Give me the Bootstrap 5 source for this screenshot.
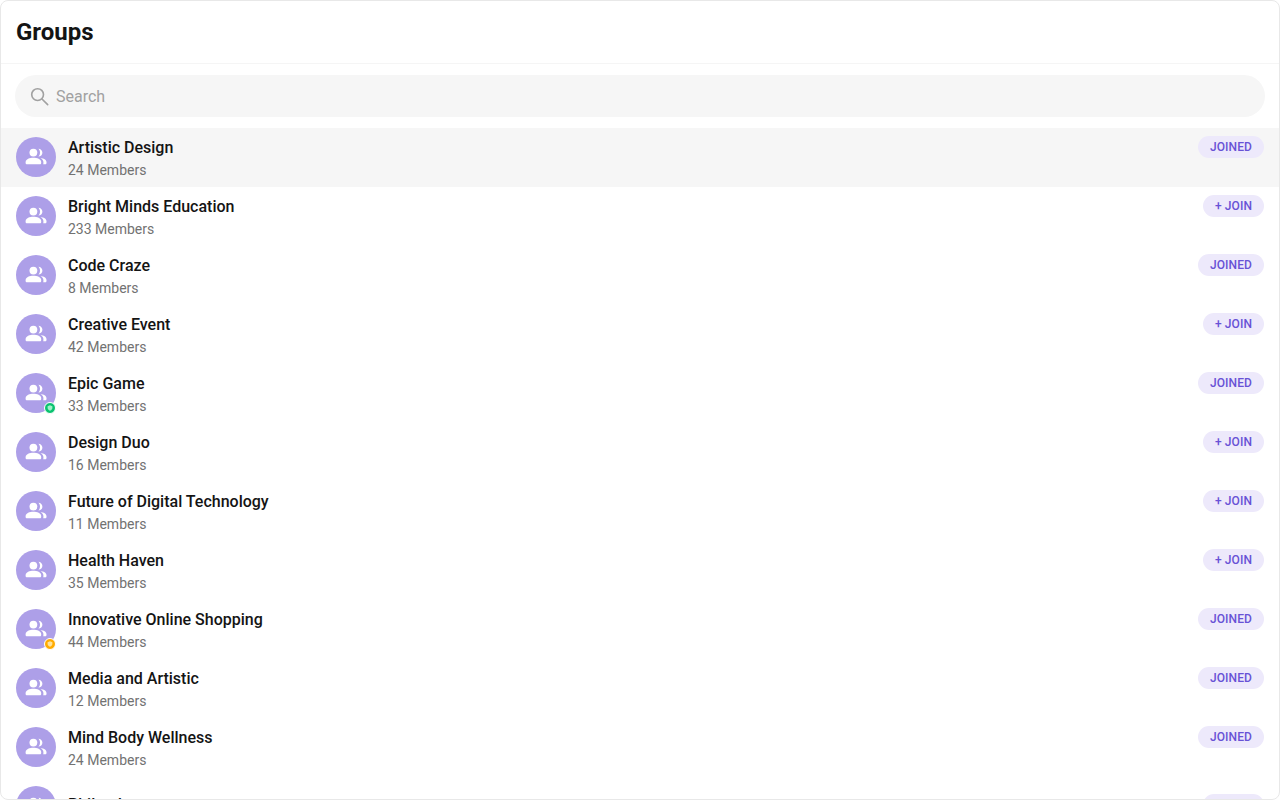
<!DOCTYPE html>
<html lang="en">

<head>
    <meta charset="UTF-8">
    <meta name="viewport" content="width=device-width, initial-scale=1.0">
    <title>Groups</title>
    <link href="https://cdn.jsdelivr.net/npm/bootstrap@5.3.0/dist/css/bootstrap.min.css" rel="stylesheet">
    <style>
        html, body {
            height: 100%;
            overflow: hidden;
        }

        body {
            font-family: Roboto, "Liberation Sans", sans-serif;
            background-color: #fff;
        }

        .groups-panel {
            height: 800px;
            border: 1px solid #e8e8e8;
            border-radius: 8px;
            overflow: hidden;
        }

        .groups-head {
            height: 63px;
            padding-left: 15px;
            border-bottom: 1px solid #f5f5f5;
        }

        .groups-head h1 {
            font-size: 24px;
            line-height: 28px;
            font-weight: 700;
            color: #141414;
        }

        .search-wrap {
            padding: 11px 14px;
        }

        .search-box {
            height: 42px;
            padding: 1px 0 0 15px;
            gap: 7px;
            background-color: #f6f6f6;
            border-radius: 21px;
            font-size: 16px;
            color: #a1a1a1;
        }

        .group-row {
            height: 59px;
            padding: 0 15px;
            gap: 12px;
        }

        .group-row.active-row {
            background-color: #f6f6f6;
        }

        .group-avatar {
            width: 40px;
            height: 40px;
            margin-top: 9px;
            background-color: #ad9fe8;
        }

        .status-dot {
            position: absolute;
            right: 0;
            bottom: -1px;
            width: 12px;
            height: 12px;
            border: 1px solid #fff;
        }

        .status-dot.dot-green {
            background-color: #09c26f;
        }

        .status-dot.dot-orange {
            background-color: #ffab00;
        }

        .status-dot svg {
            display: block;
            margin: 2px;
        }

        .group-name {
            font-size: 16px;
            line-height: 19px;
            font-weight: 500;
            color: #141414;
            margin-top: 10px;
        }

        .group-count {
            font-size: 14px;
            line-height: 17px;
            color: #727272;
            margin-top: 5px;
        }

        .join-btn {
            height: 22px;
            margin-top: 8px;
            padding: 0 12px;
            background-color: #ede9fb;
            border-radius: 11px;
            font-size: 12px;
            line-height: 22px;
            font-weight: 500;
            letter-spacing: .1px;
            color: #6852d6;
        }

        /* last row sits lower in the list, only its top shows */
        .group-row.low-row .group-name {
            margin-top: 18px;
        }

        .group-row.low-row .join-btn {
            margin-top: 17px;
        }
    </style>
</head>

<body>
    <svg width="0" height="0" class="d-block">
        <symbol id="group-icon" viewBox="0 0 24 24">
            <circle cx="9.4" cy="7.6" r="3.9" />
            <path d="M1.6 17.2c0-3 4.2-4.4 7.8-4.4s7.8 1.4 7.8 4.4v.7c0 .9-.6 1.4-1.4 1.4H3c-.8 0-1.4-.5-1.4-1.4z" />
            <path d="M14.4 3.8c2.3.1 4 1.8 4 3.9s-1.7 3.8-4 3.9c1-1 1.6-2.4 1.6-3.9s-.6-2.9-1.6-3.9z" />
            <path d="M16.6 13c3 .4 5.9 1.7 5.9 4.1v.8c0 .9-.6 1.4-1.4 1.4h-1.9c.1-.4.2-.9.2-1.4v-.8c0-1.5-1-2.8-2.8-4.1z" />
        </symbol>
        <symbol id="shield-icon" viewBox="0 0 6 6">
            <path d="M3 .3l2.4.9v1.6C5.4 4.200 4.400 5.300 3 5.700 1.600 5.300.6 4.200.6 2.800V1.200z" />
        </symbol>
    </svg>

    <div class="groups-panel bg-white">
        <div class="groups-head d-flex align-items-center">
            <h1 class="m-0">Groups</h1>
        </div>
        <div class="search-wrap">
            <div class="search-box d-flex align-items-center">
                <svg width="19" height="19" viewBox="0 0 20 20" fill="none" stroke="#a1a1a1" stroke-width="1.7">
                    <circle cx="8" cy="8" r="6.2" />
                    <path d="M12.6 12.6l6 6" stroke-linecap="round" />
                </svg>
                <span>Search</span>
            </div>
        </div>
        <div id="group-list"></div>
    </div>

    <script src="https://cdn.jsdelivr.net/npm/bootstrap@5.3.0/dist/js/bootstrap.bundle.min.js"></script>
    <script>
        const groups = [
            ['Artistic Design', 24, 'JOINED'],
            ['Bright Minds Education', 233, '+ JOIN'],
            ['Code Craze', 8, 'JOINED'],
            ['Creative Event', 42, '+ JOIN'],
            ['Epic Game', 33, 'JOINED', 'dot-green', '#9ff0c8'],
            ['Design Duo', 16, '+ JOIN'],
            ['Future of Digital Technology', 11, '+ JOIN'],
            ['Health Haven', 35, '+ JOIN'],
            ['Innovative Online Shopping', 44, 'JOINED', 'dot-orange', '#ffe29a'],
            ['Media and Artistic', 12, 'JOINED'],
            ['Mind Body Wellness', 24, 'JOINED'],
            ['Philanthropy', 18, '+ JOIN']
        ];

        const list = document.getElementById('group-list');
        groups.forEach((g, i) => {
            const dot = g[3] ? `<span class="status-dot rounded-circle ${g[3]}"><svg width="6" height="6" fill="${g[4]}"><use href="#shield-icon" /></svg></span>` : '';
            list.insertAdjacentHTML('beforeend', `
                <div class="group-row d-flex ${i === 0 ? 'active-row' : ''} ${i === groups.length - 1 ? 'low-row' : ''}">
                    <div class="group-avatar rounded-circle position-relative flex-shrink-0 d-flex align-items-center justify-content-center">
                        <svg width="24" height="24" fill="#fff"><use href="#group-icon" /></svg>
                        ${dot}
                    </div>
                    <div class="flex-grow-1">
                        <div class="group-name">${g[0]}</div>
                        <div class="group-count">${g[1]} Members</div>
                    </div>
                    <div class="join-btn flex-shrink-0">${g[2]}</div>
                </div>`);
        });
    </script>
</body>

</html>
